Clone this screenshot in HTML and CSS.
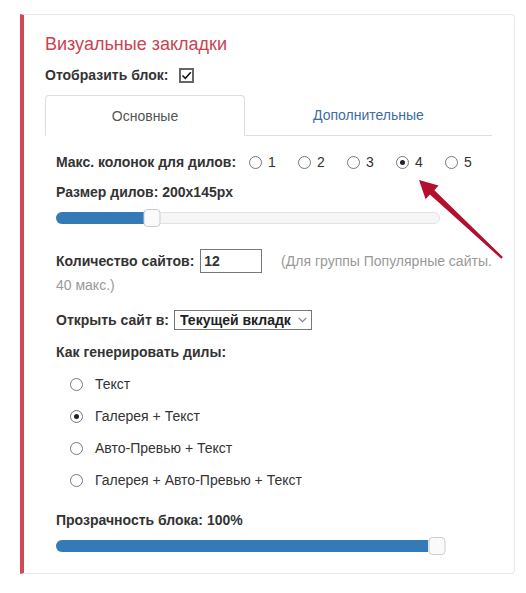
FILE: index.html
```html
<!DOCTYPE html>
<html>

<head>
    <title>Визуальные закладки</title>
    <meta charset="utf-8">
    <link rel="stylesheet" href="styles.css">
</head>

<body>
    <div class="page">
        <div class="card">
            <h2 class="title">Визуальные закладки</h2>

            <div class="row show-row">
                <span class="label">Отобразить блок:</span>
                <span class="checkbox">
                    <svg width="11" height="11" viewBox="0 0 11 11">
                        <path d="M1.5 5.5 L4.3 8.3 L9.8 2.2" fill="none" stroke="#111" stroke-width="1.5"/>
                    </svg>
                </span>
            </div>

            <div class="tabs">
                <div class="tab active">Основные</div>
                <div class="tab">Дополнительные</div>
            </div>

            <div class="tab-body">
                <div class="row cols-row">
                    <span class="label">Макс. колонок для дилов:</span>
                    <div class="radio-group">
                        <span class="radio-opt"><span class="radio"></span>1</span>
                        <span class="radio-opt"><span class="radio"></span>2</span>
                        <span class="radio-opt"><span class="radio"></span>3</span>
                        <span class="radio-opt"><span class="radio checked"></span>4</span>
                        <span class="radio-opt"><span class="radio"></span>5</span>
                    </div>
                </div>

                <div class="row size-row">
                    <span class="label">Размер дилов: 200x145px</span>
                </div>
                <div class="slider first-slider">
                    <div class="slider-fill" style="width: 24.9%"></div>
                    <div class="slider-thumb" style="left: 24.9%"></div>
                </div>

                <p class="count-row">
                    <span class="label">Количество сайтов:</span>
                    <span class="text-input">12</span>
                    <span class="hint">(Для группы Популярные сайты. 40 макс.)</span>
                </p>

                <div class="row open-row">
                    <span class="label">Открыть сайт в:</span>
                    <span class="select">
                        <span class="select-text">Текущей вкладк</span>
                        <svg width="9" height="6" viewBox="0 0 9 6">
                            <path d="M0.8 1 L4.5 4.6 L8.2 1" fill="none" stroke="#888" stroke-width="1.2"/>
                        </svg>
                    </span>
                </div>

                <div class="row gen-row">
                    <span class="label">Как генерировать дилы:</span>
                </div>

                <ul class="gen-list">
                    <li><span class="radio"></span>Текст</li>
                    <li><span class="radio checked"></span>Галерея + Текст</li>
                    <li><span class="radio"></span>Авто-Превью + Текст</li>
                    <li><span class="radio"></span>Галерея + Авто-Превью + Текст</li>
                </ul>

                <div class="row opacity-row">
                    <span class="label">Прозрачность блока: 100%</span>
                </div>
                <div class="slider last-slider">
                    <div class="slider-fill" style="width: 97.5%"></div>
                    <div class="slider-thumb" style="left: 99.6%"></div>
                </div>
            </div>
        </div>

        <!-- annotation arrow pointing at the 4 columns option -->
        <svg class="arrow" width="526" height="593" viewBox="0 0 526 593">
            <polygon fill="#b3102e"
                points="419,180 438.5,185.5 434.4,190.2 502.9,257.1 501.3,258.8 429.9,194.6 425.6,199.2"/>
        </svg>
    </div>
</body>

</html>
```

FILE: styles.css
```css
body {
    margin: 0;
    font-family: 'Liberation Sans', Arial, sans-serif;
    font-size: 14px;
    color: #333;
    background: #fff;
}

.page {
    position: relative;
    width: 526px;
    height: 593px;
    padding: 14px 0 0 20px;
    box-sizing: border-box;
}

.card {
    width: 495px;
    height: 560px;
    box-sizing: border-box;
    border: 1px solid #e8e8e8;
    border-left: 4px solid #cf4a55;
    border-radius: 0 4px 4px 0;
    padding: 18px 22px 0 21px;
}

.title {
    margin: 0;
    font-size: 18px;
    line-height: 22px;
    font-weight: normal;
    color: #c9444f;
}

.row {
    display: flex;
    align-items: center;
    height: 18px;
    line-height: 18px;
    white-space: nowrap;
}

.label {
    font-weight: bold;
    color: #333;
    flex: none;
}

.show-row {
    margin-top: 11px;
}

.checkbox {
    display: flex;
    align-items: center;
    justify-content: center;
    width: 15px;
    height: 15px;
    box-sizing: border-box;
    border: 2px solid #666;
    margin-left: 11px;
}

.tabs {
    display: flex;
    margin-top: 11px;
    width: 447px;
}

.tab {
    height: 41px;
    line-height: 41px;
    box-sizing: border-box;
    text-align: center;
    color: #3e6ca3;
    flex: 1;
    border-bottom: 1px solid #ddd;
}

.tab.active {
    flex: 0 0 200px;
    color: #555;
    border: 1px solid #ddd;
    border-bottom-color: transparent;
    border-radius: 4px 4px 0 0;
}

.tab-body {
    padding-left: 11px;
}

.cols-row {
    margin-top: 17px;
}

.radio-group {
    display: flex;
    flex: none;
    margin-left: 13px;
}

.radio-opt {
    display: flex;
    align-items: center;
    width: 49px;
    color: #333;
}

.radio-opt:last-child {
    width: auto;
}

.radio {
    display: inline-block;
    width: 13px;
    height: 13px;
    box-sizing: border-box;
    border: 1px solid #777;
    border-radius: 50%;
    margin-right: 6px;
    position: relative;
    flex: none;
}

.radio.checked::after {
    content: '';
    position: absolute;
    left: 3px;
    top: 3px;
    width: 5px;
    height: 5px;
    border-radius: 50%;
    background: #222;
}

.size-row {
    margin-top: 12px;
}

.slider {
    position: relative;
    width: 384px;
    height: 12px;
    box-sizing: border-box;
    border: 1px solid #e2e2e2;
    border-radius: 6px;
    background: #f6f6f6;
}

.first-slider {
    margin-top: 11px;
}

.slider-fill {
    height: 100%;
    background: #337ab7;
    border-radius: 6px 0 0 6px;
    margin: -1px 0 0 -1px;
    padding-bottom: 2px;
}

.slider-thumb {
    position: absolute;
    top: -4px;
    width: 17px;
    height: 18px;
    box-sizing: border-box;
    transform: translateX(-50%);
    background: #fafafa;
    border: 1px solid #ccc;
    border-radius: 4px;
}

.count-row {
    margin: 25px 0 0;
    line-height: 24px;
}

.text-input {
    display: inline-block;
    width: 62px;
    height: 24px;
    box-sizing: border-box;
    border: 1px solid #777;
    padding-left: 3px;
    margin-left: 2px;
    font-weight: bold;
    line-height: 22px;
}

.hint {
    color: #999;
    margin-left: 15px;
}

.open-row {
    margin-top: 13px;
    height: 20px;
}

.select {
    display: flex;
    align-items: center;
    width: 138px;
    height: 20px;
    box-sizing: border-box;
    border: 1px solid #777;
    margin-left: 5px;
    padding: 0 4px 0 5px;
    font-weight: bold;
    color: #222;
}

.select-text {
    flex: 1;
    overflow: hidden;
}

.select svg {
    margin-left: 3px;
}

.gen-row {
    margin-top: 13px;
}

.gen-list {
    list-style: none;
    margin: 7px 0 0;
    padding: 0 0 0 14px;
}

.gen-list li {
    display: flex;
    align-items: center;
    height: 32px;
}

.gen-list .radio {
    margin-right: 12px;
}

.opacity-row {
    margin-top: 15px;
}

.last-slider {
    margin-top: 11px;
}

.arrow {
    position: absolute;
    left: 0;
    top: 0;
    pointer-events: none;
}
```
